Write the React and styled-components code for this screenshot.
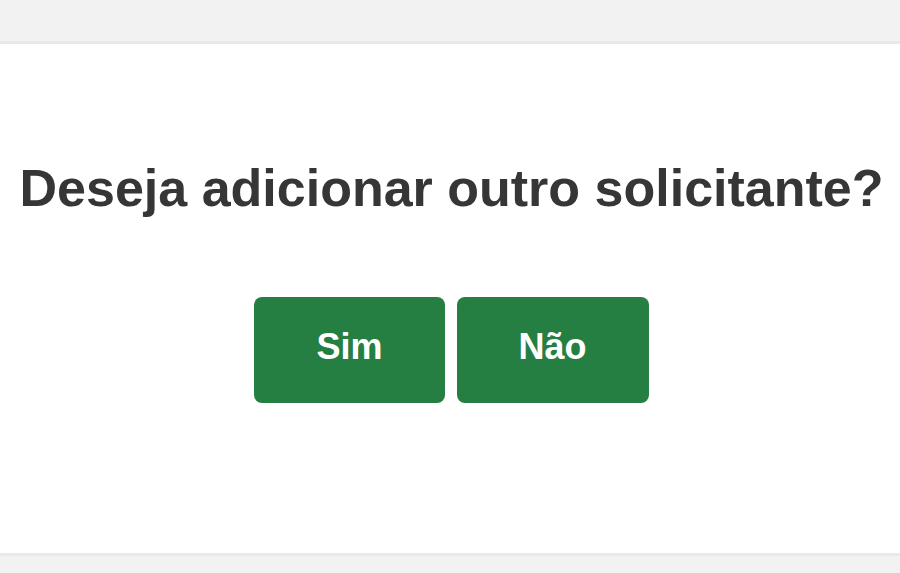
import React from "react";
import styled, { createGlobalStyle } from "styled-components";

const GlobalStyle = createGlobalStyle`
  html, body {
    margin: 0;
    padding: 0;
    background: #f2f2f2;
    font-family: "Liberation Sans", Arial, sans-serif;
  }
`;

const Page = styled.div`
  width: 900px;
  height: 573px;
  overflow: hidden;
  padding-top: 41px;
  box-sizing: border-box;
`;

const Panel = styled.div`
  background: #ffffff;
  border-top: 3px solid #e9e9e9;
  border-bottom: 3px solid #e9e9e9;
  height: 515px;
  box-sizing: border-box;
  display: flex;
  flex-direction: column;
  align-items: center;
  padding-top: 114px;
  padding-left: 3px;
`;

const Question = styled.h2`
  margin: 0;
  font-size: 52px;
  line-height: 60px;
  font-weight: bold;
  color: #363636;
  white-space: nowrap;
`;

const Actions = styled.div`
  display: flex;
  gap: 12px;
  margin-top: 79px;
`;

const Button = styled.button`
  height: 106px;
  padding: 0 62px;
  padding-bottom: 6px;
  border: none;
  border-radius: 8px;
  background: #267f42;
  color: #ffffff;
  font-family: "Liberation Sans", Arial, sans-serif;
  font-size: 36px;
  font-weight: bold;
  cursor: pointer;
`;

export default function App() {
  return (
    <>
      <GlobalStyle />
      <Page>
        <Panel>
          <Question>Deseja adicionar outro solicitante?</Question>
          <Actions>
            <Button>Sim</Button>
            <Button>Não</Button>
          </Actions>
        </Panel>
      </Page>
    </>
  );
}
